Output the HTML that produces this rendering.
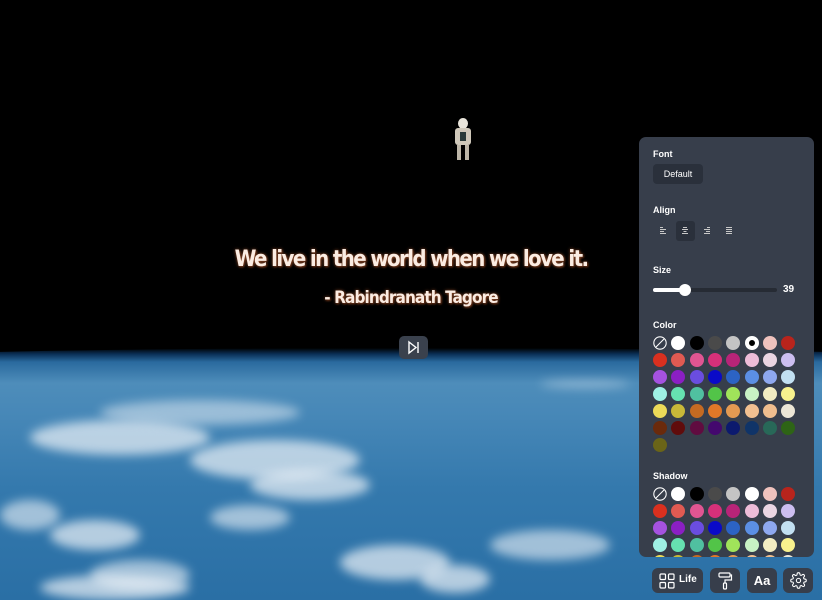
<!DOCTYPE html>
<html><head><meta charset="utf-8"><style>
*{margin:0;padding:0;box-sizing:border-box}
html,body{width:822px;height:600px;overflow:hidden}
body{background:#000;position:relative;font-family:"Liberation Sans",sans-serif}
.wrap{position:absolute;left:0;top:0;width:822px;height:600px;overflow:hidden}
.earth{position:absolute;left:-200px;top:348px;width:1222px;height:252px;border-radius:50% 50% 0 0/6% 6% 0 0;background:linear-gradient(180deg,#000 0,#0a2f55 6px,#2a6a9e 14px,#4e8dba 35px,#4687b7 70px,#3479ad 140px,#2a6fa5 250px)}
.cl{position:absolute;background:#eef3f8;border-radius:50%;filter:blur(5px);opacity:.7}
.q{position:absolute;left:0;width:822px;text-align:center;color:#fbece2;font-weight:bold;text-shadow:0 0 3px #8a4a2a,1px 1px 2px #6a3015;font-family:'DejaVu Sans Condensed','Liberation Sans',sans-serif}
.panel{position:absolute;left:639px;top:137px;width:175px;height:420px;background:#373e4b;border-radius:7px;overflow:hidden}
.lbl{position:absolute;left:14px;color:#fff;font-size:9px;font-weight:bold}
.sw{position:absolute;width:14px;height:14px;border-radius:50%}
.btn{position:absolute;top:568px;height:25px;background:#373e4b;border-radius:6px;color:#fff}
</style></head><body><div class="wrap">
<div class="earth"></div>
<div class="cl" style="left:30px;top:420px;width:180px;height:35px"></div>
<div class="cl" style="left:100px;top:400px;width:200px;height:25px;opacity:.5"></div>
<div class="cl" style="left:190px;top:440px;width:170px;height:40px;opacity:.7"></div>
<div class="cl" style="left:250px;top:470px;width:120px;height:30px"></div>
<div class="cl" style="left:0;top:500px;width:60px;height:30px;opacity:.6"></div>
<div class="cl" style="left:50px;top:520px;width:90px;height:30px"></div>
<div class="cl" style="left:90px;top:560px;width:100px;height:30px;opacity:.6"></div>
<div class="cl" style="left:210px;top:505px;width:80px;height:25px;opacity:.6"></div>
<div class="cl" style="left:340px;top:545px;width:110px;height:35px"></div>
<div class="cl" style="left:420px;top:565px;width:70px;height:28px;opacity:.7"></div>
<div class="cl" style="left:490px;top:530px;width:120px;height:30px;opacity:.6"></div>
<div class="cl" style="left:40px;top:575px;width:150px;height:25px"></div>
<div class="cl" style="left:540px;top:380px;width:90px;height:8px;opacity:.4"></div>
<div style="position:absolute;left:453px;top:118px;width:20px;height:44px">
<div style="position:absolute;left:5px;top:0;width:10px;height:11px;border-radius:50%;background:#e8e4da"></div>
<div style="position:absolute;left:2px;top:10px;width:16px;height:17px;background:#cfc8ba;border-radius:3px"></div>
<div style="position:absolute;left:7px;top:14px;width:6px;height:9px;background:#2a3a3a"></div>
<div style="position:absolute;left:4px;top:27px;width:4px;height:15px;background:#bdb6a8"></div>
<div style="position:absolute;left:12px;top:27px;width:4px;height:15px;background:#bdb6a8"></div>
</div>
<div class="q" style="top:247px;font-size:22px;letter-spacing:-1.6px">We live in the world when we love it.</div>
<div class="q" style="top:288px;font-size:17px;letter-spacing:-0.9px">- Rabindranath Tagore</div>
<div style="position:absolute;left:399px;top:336px;width:29px;height:23px;background:#3a414d;border-radius:5px">
<svg width="29" height="23"><path d="M10 6 L17 11.5 L10 17 Z M19 6 V17" fill="none" stroke="#fff" stroke-width="1.4"/></svg></div>

<div class="panel">
<div class="lbl" style="top:12px">Font</div>
<div style="position:absolute;left:14px;top:27px;width:50px;height:20px;background:#2a303b;border-radius:4px;color:#fff;font-size:9px;text-align:center;line-height:20px">Default</div>
<div class="lbl" style="top:68px">Align</div>
<div style="position:absolute;left:37px;top:84px;width:19px;height:20px;background:#2a303b;border-radius:3px"></div>
<svg style="position:absolute;left:14px;top:84px" width="110" height="20"><g stroke="#c8c8c8" stroke-width="1"><path d="M7 6.5h3M7 8.5h6M7 10.5h4M7 12.5h6"/><path d="M30 6.5h4M29 8.5h6M30.5 10.5h3M29 12.5h6"/><path d="M54 6.5h3M51 8.5h6M53 10.5h4M51 12.5h6"/><path d="M73 6.5h6M73 8.5h6M73 10.5h6M73 12.5h6"/></g></svg>
<div class="lbl" style="top:128px">Size</div>
<div style="position:absolute;left:14px;top:151px;width:124px;height:4px;background:#262b34;border-radius:2px"></div>
<div style="position:absolute;left:14px;top:151px;width:34px;height:4px;background:#fff;border-radius:2px"></div>
<div style="position:absolute;left:40px;top:147px;width:12px;height:12px;background:#fff;border-radius:50%"></div>
<div style="position:absolute;left:144px;top:147px;color:#fff;font-size:10px;font-weight:bold">39</div>
<div class="lbl" style="top:183px">Color</div>
<div class="lbl" style="top:334px">Shadow</div>
<div id="g"></div>
</div>
<script>
var rows=[["n","#fff","#000","#4a4a4a","#c4c4c4","s","#efc2bd","#b8241c"],
["#d9301f","#e05a52","#e05592","#d6307a","#b82478","#edbcd8","#ead5e2","#ccbef0"],
["#a552e0","#8b1fc4","#6a4de0","#0a0ac8","#2c63c4","#5b8fe4","#8ea8f0","#c2e0f2"],
["#9ef0e4","#66e0b0","#50c0a0","#52c448","#a0e45a","#c8f2c4","#f2ecc2","#f8f28e"],
["#ecda58","#c8b838","#c46a22","#e07828","#e49a52","#f2c090","#f0be8e","#ece6d6"],
["#6a2a0c","#600c0c","#600c40","#44086e","#0c1a6e","#103468","#286858","#2e6416"],
["#6a6418"]];
var h="";
function grid(top,rs,shadow){rs.forEach(function(r,i){r.forEach(function(c,j){var x=14+j*18.3,y=top+i*17;
if(c=="n")h+='<svg class="sw" style="left:'+x+'px;top:'+y+'px" width="14" height="14"><circle cx="7" cy="7" r="6.2" fill="none" stroke="#fff" stroke-width="1.1"/><path d="M3 11L11 3" stroke="#fff" stroke-width="1.1"/></svg>';
else if(c=="s")h+='<div class="sw" style="left:'+x+'px;top:'+y+'px;background:'+(shadow?'#fff':'#000')+';border:'+(shadow?'0':'4px solid #fff')+'"></div>';
else h+='<div class="sw" style="left:'+x+'px;top:'+y+'px;background:'+c+'"></div>';});});}
grid(199,rows,false);grid(350,rows.slice(0,5),true);
document.getElementById("g").innerHTML=h;
</script>
<div class="btn" style="left:652px;width:51px">
<svg style="position:absolute;left:7px;top:5px" width="16" height="16"><g fill="none" stroke="#fff" stroke-width="1.2"><rect x="1" y="1" width="5.5" height="5.5" rx="1"/><rect x="9.5" y="1" width="5.5" height="5.5" rx="1"/><rect x="1" y="9.5" width="5.5" height="5.5" rx="1"/><rect x="9.5" y="9.5" width="5.5" height="5.5" rx="1"/></g></svg>
<span style="position:absolute;left:27px;top:6px;font-size:10px;font-weight:bold">Life</span></div>
<div class="btn" style="left:710px;width:30px">
<svg style="position:absolute;left:7px;top:4px" width="16" height="18"><g fill="none" stroke="#fff" stroke-width="1.2"><rect x="2" y="1" width="11" height="4" rx="1"/><path d="M13 3H14.5V8H8V11"/><rect x="6.5" y="11" width="3" height="6" rx="1"/></g></svg></div>
<div class="btn" style="left:747px;width:30px;font-size:13px;font-weight:bold;text-align:center;line-height:25px">Aa</div>
<div class="btn" style="left:783px;width:30px">
<svg style="position:absolute;left:7px;top:4px" width="17" height="17" viewBox="0 0 24 24"><g fill="none" stroke="#fff" stroke-width="1.5"><circle cx="12" cy="12" r="3"/><path d="M19.4 15a1.6 1.6 0 0 0 .3 1.8l.1.1a2 2 0 1 1-2.8 2.8l-.1-.1a1.6 1.6 0 0 0-1.8-.3 1.6 1.6 0 0 0-1 1.5V21a2 2 0 1 1-4 0v-.1a1.6 1.6 0 0 0-1-1.5 1.6 1.6 0 0 0-1.8.3l-.1.1a2 2 0 1 1-2.8-2.8l.1-.1a1.6 1.6 0 0 0 .3-1.8 1.6 1.6 0 0 0-1.5-1H3a2 2 0 1 1 0-4h.1a1.6 1.6 0 0 0 1.5-1 1.6 1.6 0 0 0-.3-1.8l-.1-.1a2 2 0 1 1 2.8-2.8l.1.1a1.6 1.6 0 0 0 1.8.3H9a1.6 1.6 0 0 0 1-1.5V3a2 2 0 1 1 4 0v.1a1.6 1.6 0 0 0 1 1.5 1.6 1.6 0 0 0 1.8-.3l.1-.1a2 2 0 1 1 2.8 2.8l-.1.1a1.6 1.6 0 0 0-.3 1.8V9a1.6 1.6 0 0 0 1.5 1H21a2 2 0 1 1 0 4h-.1a1.6 1.6 0 0 0-1.5 1z"/></g></svg></div>
</div></body></html>
